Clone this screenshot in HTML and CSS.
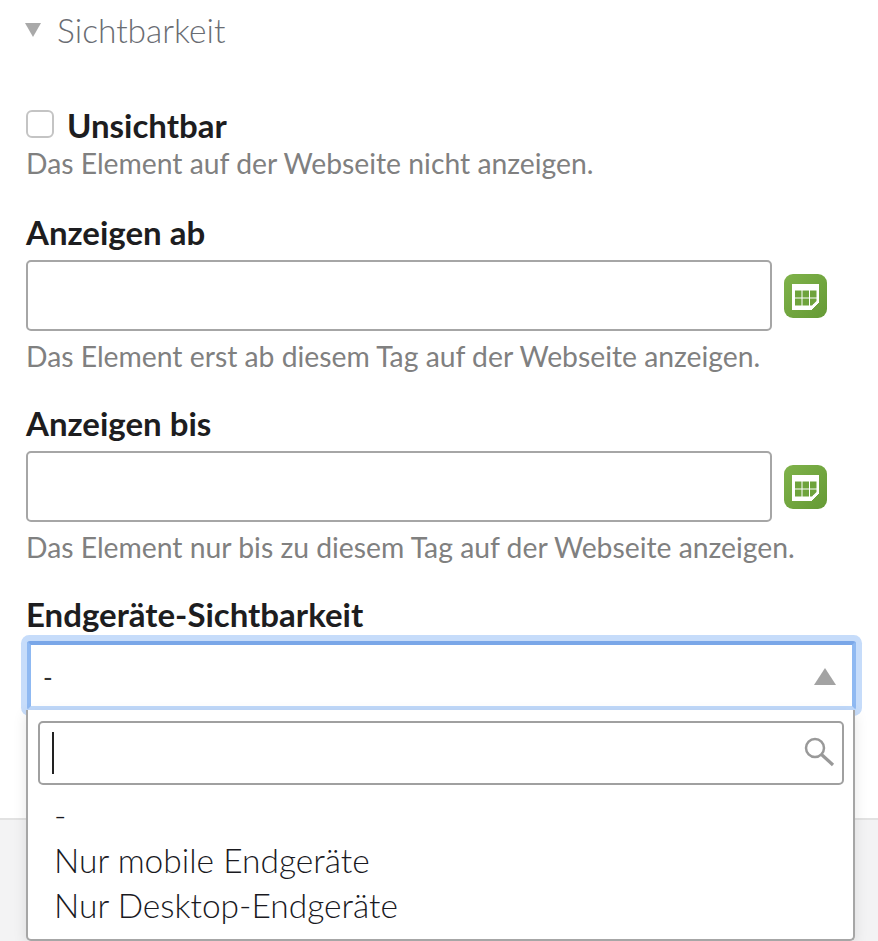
FILE: index.html
```html
<!DOCTYPE html>
<html lang="de">
<head>
<meta charset="utf-8">
<title>Sichtbarkeit</title>
<link rel="stylesheet" href="styles.css">
</head>
<body>
<main class="panel">
  <h2 class="section"><span class="caret"></span>Sichtbarkeit</h2>
  <div class="check-field">
    <label class="check-label"><span class="checkbox"></span>Unsichtbar</label>
    <p class="hint">Das Element auf der Webseite nicht anzeigen.</p>
  </div>
  <div class="field">
    <label class="label">Anzeigen ab</label>
    <div class="date-row">
      <div class="input"></div>
      <span class="cal"><svg width="27" height="26" viewBox="0 0 27 26"><path d="M0 0h27v19l-7 7H0z" fill="#fff"/><path d="M3 6.500h6.500V13.500H3zM10.500 6.500H17V13.500h-6.500zM18 6.500h6.500V13.500H18zM3 14.500h6.500v7H3zM10.500 14.500H17v7h-6.500zM18 14.500h6.500v2.500L20 21.500h-2z" fill="#6ea33c"/><path d="M21 25v-5h5z" fill="#fff"/><path d="M20 26l7-7" stroke="#6ea33c" stroke-width="1"/></svg></span>
    </div>
    <p class="hint">Das Element erst ab diesem Tag auf der Webseite anzeigen.</p>
  </div>
  <div class="field">
    <label class="label">Anzeigen bis</label>
    <div class="date-row">
      <div class="input"></div>
      <span class="cal"><svg width="27" height="26" viewBox="0 0 27 26"><path d="M0 0h27v19l-7 7H0z" fill="#fff"/><path d="M3 6.500h6.500V13.500H3zM10.500 6.500H17V13.500h-6.500zM18 6.500h6.500V13.500H18zM3 14.500h6.500v7H3zM10.500 14.500H17v7h-6.500zM18 14.500h6.500v2.500L20 21.500h-2z" fill="#6ea33c"/><path d="M21 25v-5h5z" fill="#fff"/><path d="M20 26l7-7" stroke="#6ea33c" stroke-width="1"/></svg></span>
    </div>
    <p class="hint">Das Element nur bis zu diesem Tag auf der Webseite anzeigen.</p>
  </div>
  <div class="field select-field">
    <label class="label">Endgeräte-Sichtbarkeit</label>
    <div class="select">
      <span>-</span><span class="up"></span>
    </div>
    <div class="dropdown">
      <div class="search">
        <span class="cursor"></span>
        <svg width="32" height="32" viewBox="0 0 32 32"><circle cx="11" cy="11" r="9" fill="none" stroke="#999" stroke-width="2.500"/><path d="M17.500 17.500L29 28" stroke="#999" stroke-width="3.200"/></svg>
      </div>
      <ul class="options">
        <li>-</li>
        <li>Nur mobile Endgeräte</li>
        <li>Nur Desktop-Endgeräte</li>
      </ul>
    </div>
  </div>
</main>
<div class="footer"></div>
</body>
</html>
```
FILE: styles.css
```css
html, body { margin: 0; padding: 0; background: #fff; }
body {
  height: 941px;
  overflow: hidden;
  display: flex;
  flex-direction: column;
  font-family: Lato, "Open Sans", sans-serif;
  color: #222;
}
.panel { height: 818px; padding-left: 26px; box-sizing: border-box; }
.section {
  margin: 0;
  padding-top: 10px;
  display: flex;
  align-items: center;
  font-size: 33.500px;
  line-height: 40px;
  font-weight: 300;
  color: #6a6d73;
}
.caret {
  width: 0;
  height: 0;
  margin: 0 16px 0 -1px;
  border-left: 8px solid transparent;
  border-right: 8px solid transparent;
  border-top: 14px solid #a9a9a9;
}
.check-field { margin-top: 56px; }
.check-field .hint { margin-top: 2px; }
.check-label {
  display: flex;
  align-items: center;
  font-size: 33px;
  line-height: 38px;
  font-weight: 700;
  color: #1d1d20;
}
.checkbox {
  width: 28px;
  height: 28px;
  margin-right: 13px;
  box-sizing: border-box;
  border: 2px solid #c4c4c4;
  border-radius: 6px;
  background: #fff;
  position: relative;
  top: -1px;
}
.hint {
  margin: 1px 0 0;
  font-size: 28.300px;
  line-height: 34px;
  font-weight: 400;
  color: #808080;
}
.label {
  display: block;
  margin-top: 32px;
  font-size: 33px;
  line-height: 40px;
  font-weight: 700;
  color: #1d1d20;
}
.field + .field .label { margin-top: 30px; }
.date-row { display: flex; align-items: center; margin-top: 8px; }
.input {
  width: 746px;
  height: 71px;
  box-sizing: border-box;
  border: 2px solid #a6a6a6;
  border-radius: 5px;
  background: #fff;
}
.cal {
  width: 43px;
  height: 44px;
  margin-left: 12px;
  padding-top: 2px;
  box-sizing: border-box;
  border-radius: 9px;
  background: linear-gradient(135deg, #7fb24a, #659a35);
  display: flex;
  align-items: center;
  justify-content: center;
}
.date-row + .hint { margin-top: 8px; }
.select-field { position: relative; }
.select {
  width: 829px;
  height: 69px;
  margin-top: 7px;
  margin-left: 1px;
  padding: 2px 16px 0 12px;
  box-sizing: border-box;
  border: 4px solid #7aa7e8;
  border-left-color: #8fb9f2;
  border-right-color: #8fb9f2;
  border-bottom-color: #c0d9fa;
  border-radius: 3px;
  box-shadow: 0 0 0 6px #c6dcfa;
  display: flex;
  align-items: center;
  justify-content: space-between;
  font-size: 26px;
  color: #333;
  background: #fff;
}
.up {
  width: 0;
  height: 0;
  border-left: 11px solid transparent;
  border-right: 11px solid transparent;
  border-bottom: 17px solid #a3a3a3;
}
.dropdown {
  position: absolute;
  left: 0;
  top: 116px;
  width: 829px;
  height: 231px;
  box-sizing: border-box;
  border: 2px solid #a6a6a6;
  border-top: 0;
  border-radius: 0 0 5px 5px;
  background: #fff;
  box-shadow: 0 4px 14px rgba(0,0,0,.1);
  padding: 11px 9px 0 10px;
}
.search {
  height: 64px;
  box-sizing: border-box;
  border: 2px solid #a0a0a0;
  border-radius: 5px;
  display: flex;
  align-items: center;
  justify-content: space-between;
  padding: 0 6px 0 12px;
}
.cursor { width: 2px; height: 42px; background: #222; }
.options {
  list-style: none;
  margin: 8px 0 0 16px;
  padding: 0;
  font-size: 33.500px;
  line-height: 45px;
  font-weight: 300;
  color: #1a1a1f;
}
.footer { flex: 1; background: #f3f3f4; border-top: 2px solid #e2e2e2; box-sizing: border-box; }
```
